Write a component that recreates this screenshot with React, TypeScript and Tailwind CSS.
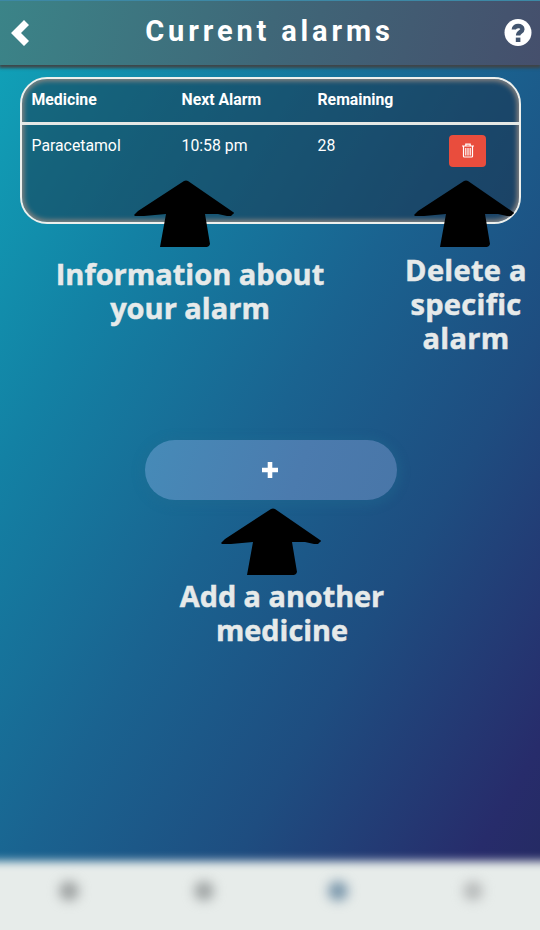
import React from "react";

function Arrow({ className }: { className: string }) {
  return (
    <svg className={`absolute h-[67px] w-[101px] ${className}`} viewBox="0 0 101 67">
      <path
        d="M50 1Q52 0 54 1L99 32Q101 33 99 34L97 36H93L84 34H71L76 64L75 66L73 67H26L32 34L10 36H1L0 35L4 31Z"
        fill="#000"
      />
    </svg>
  );
}

function TrashIcon() {
  return (
    <svg className="h-[15px] w-3" viewBox="0 0 12 15" fill="none" stroke="#fff" strokeWidth="1.2">
      <path d="M0 3H12M3.8 2.7V1.2H8.2V2.7M1.5 3.5V13.2Q1.5 14 2.3 14H9.7Q10.5 14 10.5 13.2V3.5M3.8 5V12.5M6 5V12.5M8.2 5V12.5" />
    </svg>
  );
}

function NavDot({ className }: { className: string }) {
  return (
    <div className="flex flex-1 justify-center">
      <span className={`size-5 rounded-full blur-[6px] ${className}`} />
    </div>
  );
}

const note =
  "absolute text-center font-['Open_Sans',sans-serif] leading-[34px] font-bold whitespace-nowrap text-[#e6eaea] [-webkit-text-stroke:0.5px_#e6eaea]";

export default function App() {
  return (
    <div className="relative flex h-[930px] w-[540px] flex-col overflow-hidden bg-[linear-gradient(to_bottom_right,#10a5ba_0%,#1381a4_25%,#1a6390_48%,#1e4d80_68%,#272c6b_90%,#242a60_100%)] font-[Roboto,sans-serif] text-white">
      <header className="flex h-[65px] shrink-0 items-center justify-between border-t border-[#3d88a5] bg-[linear-gradient(105deg,#3b8488,#3f6778_50%,#454f6c)] pr-2 pl-[11px] shadow-[0_2px_3px_1px_#404446]">
        <svg className="h-[26px] w-[18px]" viewBox="0 0 18 26" fill="#fff">
          <path d="M13 0L18 5L10 13L18 21L13 26L0 13Z" />
        </svg>
        <h1 className="relative top-[-2px] left-[3px] text-[29px] leading-[34px] font-bold tracking-[3.85px]">Current alarms</h1>
        <svg className="size-7" viewBox="0 0 28 28">
          <circle cx="14" cy="13.5" r="13.5" fill="#fff" />
          <path d="M9.8 10.5C10 5.8 18.4 5.8 18.4 10.2C18.4 13.2 14.1 12.6 14.1 16.6" fill="none" stroke="#43556f" strokeWidth="4.4" />
          <path d="M11.8 18.6H16.4V23H11.8Z" fill="#43556f" />
        </svg>
      </header>

      <section className="mt-3 mr-[19px] ml-5 h-[147px] shrink-0 overflow-hidden rounded-[27px] border-2 border-[#edf0ed] bg-[#1b2b3d]/45 text-[15.8px] shadow-[inset_0_0_5px_2px_#8b8581]">
        <div className="grid h-[46px] grid-cols-[150px_136px_1fr] items-center border-b-[3px] border-[#e5e8e5] pb-[2px] pl-[9.5px] font-bold">
          <span>Medicine</span>
          <span>Next Alarm</span>
          <span>Remaining</span>
        </div>
        <div className="grid grid-cols-[150px_136px_131.5px_1fr] pt-[10px] pl-[9.5px] leading-[22px]">
          <span>Paracetamol</span>
          <span>10:58 pm</span>
          <span>28</span>
          <button className="flex h-8 w-[37px] items-center justify-center rounded-[4px] bg-[#e94d3d] pb-[2px]">
            <TrashIcon />
          </button>
        </div>
      </section>

      <button className="mt-[216px] ml-[145px] flex h-[60px] w-[252px] shrink-0 items-center justify-center rounded-full bg-[linear-gradient(110deg,#468bb8,#4b7bae_60%,#4976a8)] pr-[3px] shadow-[0_2px_8px_5px_rgba(32,110,145,0.3)]">
        <svg className="size-4" viewBox="0 0 16 16" fill="#fff">
          <path d="M5.7 0H10.3V5.7H16V10.3H10.3V16H5.7V10.3H0V5.7H5.7Z" />
        </svg>
      </button>

      <nav className="relative mt-auto h-[69px] shrink-0">
        <div className="absolute -inset-x-6 top-0 -bottom-6 bg-[#e7ecea] blur-[5px]" />
        <div className="relative flex pt-5 pl-[2px]">
          <NavDot className="bg-[#9da1a1]" />
          <NavDot className="bg-[#9fa4a4]" />
          <NavDot className="bg-[#7895aa]" />
          <NavDot className="bg-[#b7baba]" />
        </div>
      </nav>

      <Arrow className="top-[180px] left-[134px]" />
      <Arrow className="top-[180px] left-[414px]" />
      <Arrow className="top-[508px] left-[221px]" />
      <p className={`${note} top-[257px] left-[40px] w-[300px] text-[29px]`}>
        Information about
        <br />
        your alarm
      </p>
      <p className={`${note} top-[253px] left-[396px] w-[140px] text-[29px] tracking-[0.3px]`}>
        Delete a
        <br />
        specific
        <br />
        alarm
      </p>
      <p className={`${note} top-[579px] left-[162px] w-[240px] text-[28.8px]`}>
        Add a another
        <br />
        medicine
      </p>
    </div>
  );
}
